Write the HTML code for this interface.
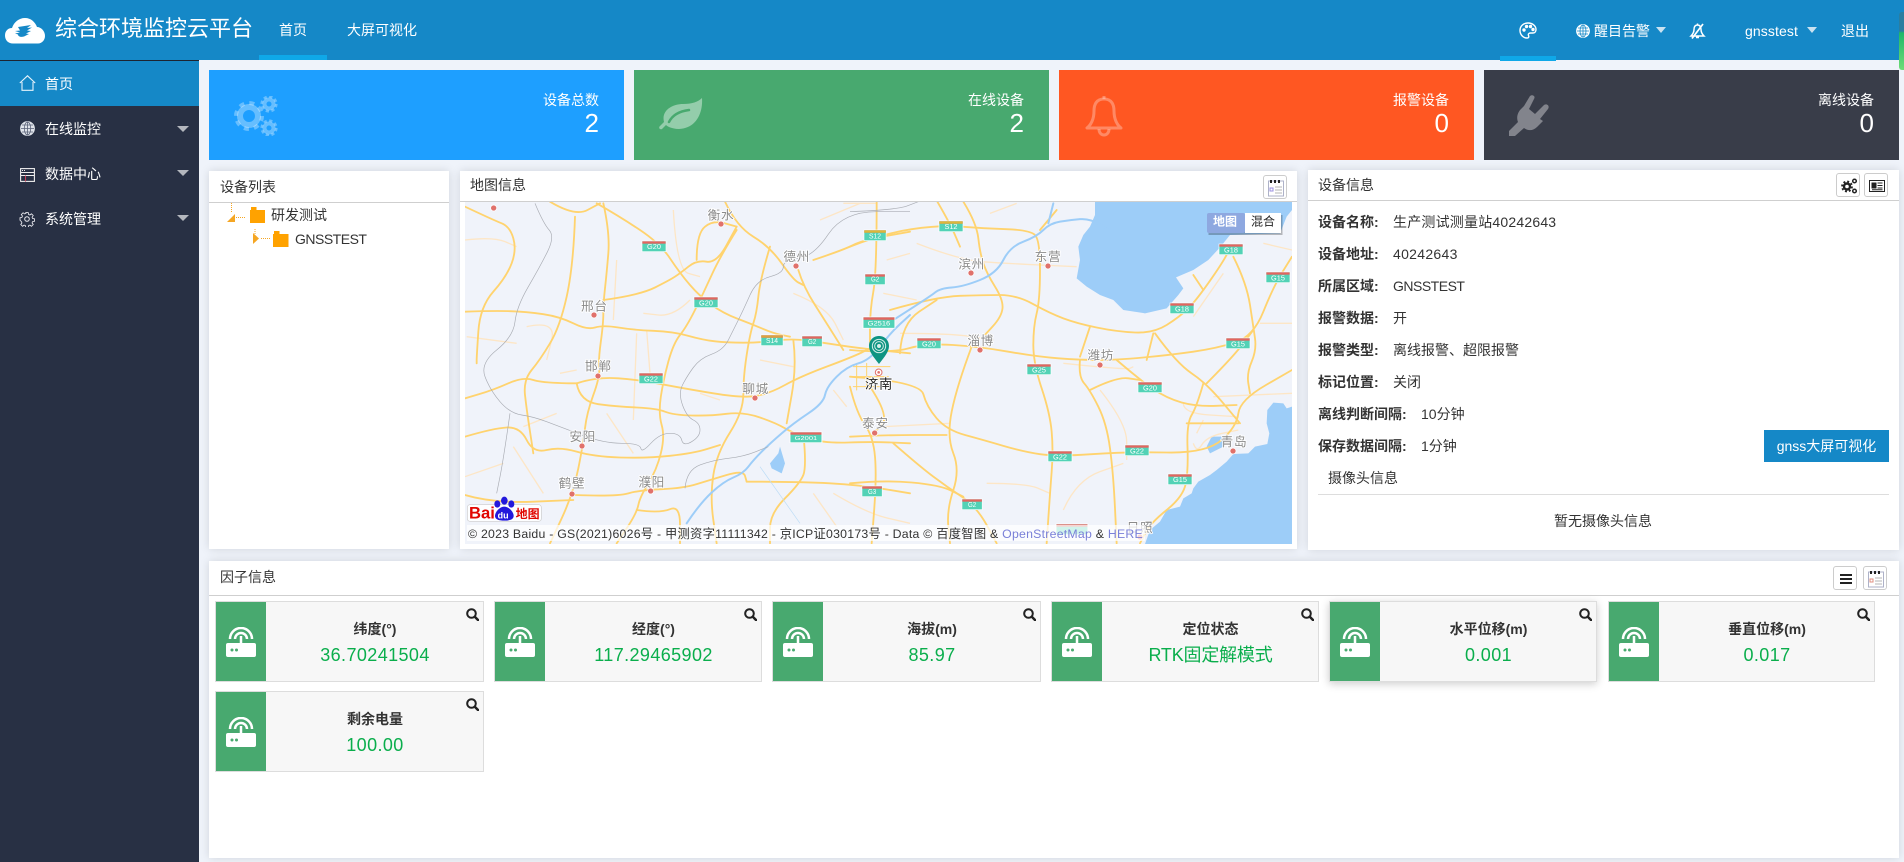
<!DOCTYPE html>
<html lang="zh"><head><meta charset="utf-8"><title>综合环境监控云平台</title>
<style>
*{box-sizing:border-box}
html,body{margin:0;padding:0;width:1904px;height:862px;overflow:hidden;background:#eff3fa;font-family:"Liberation Sans","Noto Sans CJK SC",sans-serif;font-size:14px;color:#333}
.a{position:absolute}
.t{position:absolute;white-space:nowrap;line-height:20px;height:20px}
.w{color:#fff}
.b{font-weight:bold}
.panel{position:absolute;background:#fff;box-shadow:0 0 9px rgba(0,0,0,.13)}
.line{position:absolute;height:1px;background:#cfcfcf}
.stat{position:absolute;top:70px;width:415px;height:90px;color:#fff}
.stat .n{position:absolute;right:25px;top:20px;line-height:20px;white-space:nowrap}
.stat .v{position:absolute;right:25px;top:38px;font-size:26px;line-height:30px}
.stat svg{position:absolute}
.btn{position:absolute;width:24px;height:24px;border:1px solid #ccc;border-radius:3px;background:#fff}
.btn svg{position:absolute;left:3px;top:3px}
.card{position:absolute;width:269px;height:81px;border:1px solid #ddd;background:#f7f7f7}
.card .g{position:absolute;left:0;top:0;bottom:0;width:50px;background:#48a96f}
.card .g svg{position:absolute;left:10px;top:25px}
.card .s{position:absolute;left:250px;top:6px}
.card .l{position:absolute;left:50px;width:218px;text-align:center;top:17px;line-height:20px;font-weight:bold;color:#333}
.card .d{position:absolute;left:50px;width:218px;text-align:center;top:41px;line-height:24px;font-size:18px;color:#0aae4c;letter-spacing:.4px}
.map text{font-family:"Liberation Sans","Noto Sans CJK SC",sans-serif}
.r path{fill:none;stroke:#ffd36e;stroke-width:5.500;stroke-linejoin:round;stroke-linecap:round}
.m path{fill:none;stroke:#fde6c6;stroke-width:4;stroke-linejoin:round}
.c{font-size:38px;letter-spacing:2px;fill:#8b8b8b;text-anchor:middle;paint-order:stroke;stroke:#fff;stroke-width:5px}
.sh{font-size:22px;fill:#fff;text-anchor:middle}
.dot{fill:#e0716b;stroke:#fff;stroke-width:2}
.rv{fill:none;stroke:#9dcdf8;stroke-width:6;stroke-linejoin:round;stroke-linecap:round}
.bd path{fill:none;stroke:#a9acb3;stroke-width:2}
</style></head><body>

<!-- header -->
<div class="a" style="left:0;top:0;width:1904px;height:60px;background:#1588c7"></div>
<svg class="a" style="left:5px;top:18px" width="40" height="26" viewBox="0 0 40 26"><path d="M8 25.500C3 25.500 0 22 0 17.500 0 13 3 10 7 10 9 4 14 0 20 0c6 0 10 4 12 9 4 0 8 4 8 9 0 4-3 7.500-7 7.500z" fill="#fff"/><path d="M13 9l13-2-4 3 5-.5-5 3 4 .5-5 2.500 3 .5-5 2.500c-3 1-6 0-6-2l-3-1 5-1-5-1.500 5-.5z" fill="#1588c7"/></svg>
<div class="t w" style="left:55px;top:19px;font-size:22px">综合环境监控云平台</div>
<div class="t w" style="left:279px;top:20px">首页</div>
<div class="t w" style="left:347px;top:20px">大屏可视化</div>
<div class="a" style="left:259px;top:55px;width:68px;height:5px;background:#0fa8e8"></div>

<svg class="a" style="left:1519px;top:22px" width="18" height="17" viewBox="0 0 18 17" fill="none" stroke="#fff" stroke-width="1.400"><path d="M9 1C4 1 1 4.500 1 8.500S4 16 8 16c2 0 2-1.500 1.500-2.500-.6-1.500.5-2.500 2-2.500H14c2 0 3-1.500 3-3.500C17 4 13.500 1 9 1z"/><circle cx="5" cy="8" r="1" fill="#fff"/><circle cx="7.500" cy="4.500" r="1" fill="#fff"/><circle cx="11.500" cy="4.500" r="1" fill="#fff"/><circle cx="14" cy="7.500" r="1" fill="#fff"/></svg>
<div class="a" style="left:1500px;top:56px;width:56px;height:5px;background:#0fa8e8"></div>
<svg class="a" style="left:1576px;top:24px" width="14" height="14" viewBox="0 0 14 14" fill="none" stroke="#1588c7" stroke-width=".8"><circle cx="7" cy="7" r="6.500" fill="#fff" stroke="#fff"/><ellipse cx="7" cy="7" rx="3" ry="6"/><path d="M1 7h12M2 4h10M2 10h10M7 1v12"/></svg>
<div class="t w" style="left:1594px;top:21px">醒目告警</div>
<div class="a" style="left:1656px;top:27px;border:5.500px solid transparent;border-top:6px solid #c9e2f1;border-bottom:0"></div>
<svg class="a" style="left:1689px;top:23px" width="17" height="16" viewBox="0 0 17 16" fill="none" stroke="#fff" stroke-width="1.500"><path d="M8.500 2C6 2 5 4 5 6.500 5 9 4 11 2 13h13c-2-2-3-4-3-6.500C12 4 11 2 8.500 2zM7 14.500h3M8.500 .5v1.500"/><path d="M14 1L3 15.500" stroke-width="1.700"/></svg>
<div class="t w" style="left:1745px;top:21px;letter-spacing:.1px">gnsstest</div>
<div class="a" style="left:1807px;top:27px;border:5.500px solid transparent;border-top:6px solid #c9e2f1;border-bottom:0"></div>
<div class="t w" style="left:1841px;top:21px">退出</div>
<div class="a" style="left:1899px;top:12px;width:5px;height:58px;border-radius:3px 0 0 3px;background:linear-gradient(#2b7ea0 0,#2b7ea0 33%,#1fb769 36%,#6fdc77 100%)"></div>

<!-- sidebar -->
<div class="a" style="left:0;top:60px;width:199px;height:802px;background:#283044"></div>
<div class="a" style="left:0;top:60px;width:199px;height:1px;background:#1d2430"></div>
<div class="a" style="left:0;top:61px;width:199px;height:45px;background:#1588c7"></div>
<svg class="a" style="left:19px;top:75px" width="17" height="16" viewBox="0 0 17 16" fill="none" stroke="#e6f3fb" stroke-width="1.100"><path d="M.8 8L8.500 .8 16.200 8M3 7v8.300h11V7"/></svg>
<div class="t w" style="left:45px;top:74px">首页</div>
<svg class="a" style="left:20px;top:121px" width="15" height="15" viewBox="0 0 15 15" fill="none" stroke="#5a6278" stroke-width=".8"><circle cx="7.500" cy="7.500" r="7" fill="#dfe3ea" stroke="#dfe3ea"/><ellipse cx="7.500" cy="7.500" rx="3.200" ry="6.500"/><path d="M1 7.500h13M2 4h11M2 11h11M7.500 1v13"/></svg>
<div class="t w" style="left:45px;top:119px">在线监控</div>
<div class="a" style="left:177px;top:126px;border:6px solid transparent;border-top:6px solid #b4b7be;border-bottom:0"></div>
<svg class="a" style="left:20px;top:168px" width="15" height="14" viewBox="0 0 15 14" fill="none" stroke="#eee" stroke-width="1.100"><rect x=".6" y=".6" width="13.800" height="12.800"/><path d="M.6 4.500h13.800M.6 7.500h13.800" stroke-width=".9"/><path d="M5.500 7.500v6" stroke="#c04058"/><path d="M2 2.500h4" stroke-dasharray="1 1"/></svg>
<div class="t w" style="left:45px;top:164px">数据中心</div>
<div class="a" style="left:177px;top:170px;border:6px solid transparent;border-top:6px solid #b4b7be;border-bottom:0"></div>
<svg class="a" style="left:19px;top:211px" width="16" height="16" viewBox="0 0 16 16" fill="none" stroke="#e8e8ee"><circle cx="8" cy="8" r="2.300" stroke-width="1"/><path d="M6.600 .6h2.800l.4 2.200 1.500.6 1.800-1.300 2 2-1.300 1.800.6 1.500 2.200.4v2.800l-2.200.4-.6 1.500 1.300 1.800-2 2-1.800-1.300-1.500.6-.4 2.200H6.600l-.4-2.200-1.500-.6-1.800 1.300-2-2 1.300-1.800-.6-1.500L0 9.400V6.600l2.200-.4.600-1.500L1.500 2.900l2-2 1.800 1.300 1.500-.6z" stroke-width="1" transform="translate(1,1) scale(.875)"/></svg>
<div class="t w" style="left:45px;top:209px">系统管理</div>
<div class="a" style="left:177px;top:215px;border:6px solid transparent;border-top:6px solid #b4b7be;border-bottom:0"></div>

<!-- stats -->
<div class="stat" style="left:209px;background:#1e9fff">
<svg style="left:25px;top:26px" width="44" height="40" viewBox="0 0 44 40" fill="none" stroke="#fff" stroke-opacity=".32"><circle cx="15" cy="20" r="9" stroke-width="6"/><circle cx="15" cy="20" r="13" stroke-width="4" stroke-dasharray="5 5.200"/><circle cx="35" cy="8" r="4.500" stroke-width="4"/><circle cx="35" cy="8" r="7.300" stroke-width="2.600" stroke-dasharray="3.200 2.530"/><circle cx="35" cy="32" r="4.500" stroke-width="4"/><circle cx="35" cy="32" r="7.300" stroke-width="2.600" stroke-dasharray="3.200 2.530"/></svg>
<div class="n">设备总数</div><div class="v">2</div></div>
<div class="stat" style="left:634px;background:#48a96f">
<svg style="left:25px;top:28px" width="44" height="33" viewBox="0 0 44 33"><path d="M43 0C44 14 38 30 20 31 14 31 9 29 7 27L3 31C1 32-1 30 1 28L5 24C2 12 14 6 24 6 33 6 39 4 43 0Z" fill="#fff" fill-opacity=".42"/><path d="M10 24C14 16 22 13 30 12" fill="none" stroke="#48a96f" stroke-width="2.500" stroke-linecap="round"/></svg>
<div class="n">在线设备</div><div class="v">2</div></div>
<div class="stat" style="left:1059px;background:#ff5722">
<svg style="left:26px;top:25px" width="38" height="42" viewBox="0 0 38 42" fill="none" stroke="#fff" stroke-opacity=".3" stroke-width="3"><path d="M19 4C11 4 9 10 9 16 9 24 6 30 2 33H36C32 30 29 24 29 16 29 10 27 4 19 4Z" stroke-linejoin="round"/><path d="M19 1v3M14 34c0 8 10 8 10 0"/></svg>
<div class="n">报警设备</div><div class="v">0</div></div>
<div class="stat" style="left:1484px;background:#393d49">
<svg style="left:25px;top:25px" width="41" height="41" viewBox="0 0 41 41"><path d="M0 41V36L9 27C7 22 9 17 12 14L15 11 21 1C23-1 27 1 25 4L20 14 26 19 35 10C38 8 41 11 39 14L31 24 34 26 28 32C24 36 19 36 15 33L6 41Z" fill="#fff" fill-opacity=".37"/></svg>
<div class="n">离线设备</div><div class="v">0</div></div>

<!-- device list -->
<div class="panel" style="left:209px;top:171px;width:240px;height:378px"></div>
<div class="line" style="left:209px;top:202px;width:240px"></div>
<div class="t" style="left:220px;top:177px">设备列表</div>
<svg class="a" style="left:225px;top:203px" width="70" height="50" viewBox="0 0 70 50" fill="none"><path d="M6.500 0v10M11 14.500h9M30 26v10M36 35.500h9" stroke="#f5a623" stroke-dasharray="1 1"/><path d="M2 19l8-8v8z" fill="#f5a623"/><path d="M28 30l6 5.500-6 5.500z" fill="#f5a623"/></svg>
<svg class="a" style="left:250px;top:207px" width="16" height="16" viewBox="0 0 16 16"><path d="M.5 3h6V0H1v3zM0 3h15v13H0z" fill="#ffa200"/></svg>
<div class="t" style="left:271px;top:205px">研发测试</div>
<svg class="a" style="left:273px;top:231px" width="16" height="16" viewBox="0 0 16 16"><path d="M.5 3h6V0H1v3zM0 3h15.500v13H0z" fill="#ffa200"/></svg>
<div class="t" style="left:295px;top:229px;letter-spacing:-.5px">GNSSTEST</div>

<!-- map panel -->
<div class="panel" style="left:460px;top:171px;width:837px;height:378px"></div>
<div class="line" style="left:460px;top:201px;width:837px"></div>
<div class="t" style="left:470px;top:175px">地图信息</div>
<div class="btn" style="left:1263px;top:175px"><svg width="18" height="18" viewBox="0 0 18 18"><rect x="1.500" y="2" width="15" height="15" fill="#fff" stroke="#aeb2c8"/><path d="M4 1v3M8 1v3M12 1v3" stroke="#222" stroke-width="2"/><path d="M8 8h7M8 11h7M8 14h7" stroke="#b5b5b5"/><rect x="3" y="9" width="3" height="3" fill="none" stroke="#9a8fe0"/></svg></div>

<svg class="a map" style="left:465px;top:202px" width="827" height="342" viewBox="465 202 827 342">
<rect x="465" y="202" width="827" height="342" fill="#f0f3fa"/>
<g transform="translate(460,160) scale(.33333)">
<g class="m">
<path d="M15 240L100 230 170 260"/><path d="M200 500L290 480 260 600"/><path d="M470 300L460 480"/><path d="M560 510L570 640"/><path d="M530 520L520 780"/><path d="M640 150L650 330 720 350"/><path d="M1000 400L1100 440 1150 540"/><path d="M300 640L350 630"/><path d="M15 950L130 910"/><path d="M900 600L1000 620"/><path d="M720 700L780 720"/><path d="M1060 1000L1130 1100"/><path d="M1120 1000L1220 1060 1350 1090"/><path d="M160 860L250 1000"/><path d="M1150 130L1250 130"/><path d="M1280 300L1350 280"/><path d="M1080 180L1200 130"/><path d="M170 550L20 530"/><path d="M190 800L290 760"/><path d="M440 760L520 880"/><path d="M690 420L640 470 550 460"/><path d="M1120 690L1160 740"/>
</g>
<g class="r">
<path d="M15 455L100 452 200 455 300 470 380 510 430 495 520 510 640 515 730 540 800 548 900 548 1000 535 1100 550 1200 565 1350 580"/>
<path d="M15 830L100 805 180 800 220 880 300 860 400 890 560 895 700 880 780 855"/>
<path d="M350 670L250 670 190 650 100 690 15 715"/>
<path d="M350 670L410 650 540 660 670 685 850 715 930 700 1020 650 1180 590 1230 565"/>
<path d="M350 670L360 725 470 740 590 745 640 765 750 768 850 755 950 790 1000 820 1090 850 1240 845 1350 850"/>
<path d="M430 130L450 220 440 340 430 430 430 490 415 600 420 650 380 760 370 850 340 1000 270 1150"/>
<path d="M345 170L340 320 300 500 240 600 190 660 200 750 220 880"/>
<path d="M270 125L345 170 420 130"/>
<path d="M15 140L100 180 150 200 170 270 140 350 60 440 50 590 50 610"/>
<path d="M410 130L480 170 600 250 660 340 720 410 790 460 870 490 940 520 990 530"/>
<path d="M830 210L780 290 730 400 680 500 640 550 610 660 595 760 615 830 590 930 540 1010 530 1060 470 1150"/>
<path d="M795 125L830 200 930 260 1000 360 1030 375"/>
<path d="M930 260L900 360 890 460 870 520 850 650 850 755 770 880 750 1010 770 1150"/>
<path d="M1015 330L1030 380 1100 490 1150 570"/>
<path d="M430 420L540 405 630 360 660 340 710 300 770 310 830 200"/>
<path d="M710 300L710 220 760 180 830 200"/>
<path d="M1060 300L1150 270 1210 240 1350 215"/>
<path d="M1250 125L1250 340 1230 450 1230 560"/>
<path d="M1030 820L1040 920 1020 970 930 1060 930 1150"/>
<path d="M860 965L1020 965 1200 975 1350 1000"/>
<path d="M1170 680L1190 760 1240 830 1250 950 1235 1150"/>
<path d="M530 1050L600 1060 660 1035 660 1150"/>
<path d="M345 1005L470 1010 540 990 670 985 750 960 850 930 860 965"/>
<path d="M15 1005L100 1030 340 1020"/>
<path d="M1000 540L1010 620 980 790"/>
<path d="M1230 680L1290 770 1240 820"/>
<path d="M1180 620h110M1175 650h110M1180 680h110" style="stroke-width:3"/>
<path d="M1190 610v80M1220 610v80" style="stroke-width:3"/>
</g>
<path class="rv" d="M680 1090L720 1030 790 965 850 940 880 900 930 850 1000 790 1090 730 1100 680 1160 620 1230 600 1290 520 1350 465"/>
<path d="M960 860L975 910 965 940 935 925 930 910 955 880Z" fill="#9dcdf8"/>
<path d="M900 920L1020 1090" fill="none" stroke="#bcdcf6" stroke-width="2"/>
<g class="bd"><path d="M225 130L250 190 285 230 240 320 170 440 160 530 60 610 90 690 150 760 220 770 300 800 430 850 540 850 545 880 600 820 660 820 670 860 720 830 720 790 680 770 655 700 680 650 720 595 790 570 820 510 850 450 890 360 970 340 970 300 1060 290 1150 155 1350 155"/><path d="M150 760L130 900 110 1000"/><path d="M675 985L680 930 760 900 850 890 925 860"/></g>
</g>

<g transform="translate(850,160) scale(.33333)">
<path d="M735 125L735 165 720 200 700 225 685 260 690 300 680 355 710 380 750 405 790 420 820 450 885 460 950 445 985 405 1000 385 978 352 1030 330 1075 300 1110 262 1140 225 1290 220 1310 170 1326 150 1326 125Z" fill="#9dcdf8"/>
<path d="M1326 740L1310 745 1300 730 1270 728 1252 750 1250 790 1258 820 1252 852 1215 860 1195 880 1150 882 1130 905 1100 930 1080 945 1045 965 1030 985 1025 1000 1000 1015 990 1040 950 1050 930 1085 900 1110 885 1152H1326Z" fill="#9dcdf8"/>
<path d="M1085 830L1120 830 1120 860 1080 880 1070 860Z" fill="#9dcdf8"/>
<g class="m">
<path d="M420 160L500 130"/><path d="M200 250L330 300 460 310 680 320"/><path d="M200 420L100 400"/><path d="M640 610L830 630 850 620"/><path d="M750 690L830 790 830 900"/><path d="M410 970L530 970 600 1000"/><path d="M640 1050L680 960 820 910"/><path d="M1000 730L1000 760 1160 770"/><path d="M1040 820L1060 780"/><path d="M1230 490L1326 490"/><path d="M1240 250L1326 270"/><path d="M1030 470L1120 340"/><path d="M100 800L300 790"/><path d="M150 520L300 520 430 540"/><path d="M1090 710L1326 700"/><path d="M1030 850L1040 880 1070 830 1165 810"/>
</g>
<g class="r">
<path d="M262 125L300 190 330 260"/>
<path d="M0 260L100 220 270 195 400 205 540 210 570 240 570 420 550 500 550 610 600 760 610 870 600 1000 590 1150"/>
<path d="M340 125L380 190 390 280 410 340 460 420 455 470 400 530"/>
<path d="M120 450L260 410 400 405 500 405 600 460 680 490 800 515 910 520 990 470 1040 420 1130 290 1140 255"/>
<path d="M0 570L120 580 230 550 390 560 560 590 690 600 800 600 960 585 1100 565 1210 530 1270 380 1326 290"/>
<path d="M150 580L155 490 260 420"/>
<path d="M365 560L320 680 290 830 330 930 290 1050 300 1150"/>
<path d="M0 650L210 665 230 740 290 810 400 840 520 875 620 890 830 875 1070 880 1160 800 1170 720 1326 630"/>
<path d="M0 830L100 825 290 825"/>
<path d="M130 850L210 920 290 980 380 1040 440 1150"/>
<path d="M0 970L100 960 270 975 340 1010"/>
<path d="M690 600L685 650 720 690 770 790 790 940 800 1150"/>
<path d="M720 500L690 590"/>
<path d="M910 520L890 600"/>
<path d="M915 520L980 610 1070 670 1170 790"/>
<path d="M1070 670L1150 590 1210 510"/>
<path d="M1150 290L1190 370 1210 500 1220 570 1190 640 1200 700"/>
<path d="M800 600L870 660 950 715 1040 740 1160 735"/>
<path d="M1060 670L1040 740 1010 790 1015 930 1000 1010 900 1090 870 1150"/>
<path d="M620 150L570 210"/>
<path d="M1010 790L1165 790"/>
<path d="M1030 345L1060 390"/>
<path d="M720 690L800 650 870 660"/>
</g>
<path class="rv" d="M130 480L240 410 270 385 340 380 440 340 480 260 560 230 600 190 660 180 720 175 780 212"/>
<path class="rv" d="M610 130L595 190" stroke-width="5"/>
<g class="bd"><path d="M0 155L140 150 205 125"/></g>
</g>

<!-- shields -->
<defs><g id="sb"><rect x="0" y="0" width="72" height="32" fill="#52d2b6" stroke="#fff" stroke-width="2"/><rect x="1" y="1" width="70" height="7" fill="#e4645f"/></g></defs>
<g transform="translate(460,160) scale(.33333)">
<g transform="translate(546,243)"><use href="#sb"/><text class="sh" x="36" y="24">G20</text></g>
<g transform="translate(702,411)"><use href="#sb"/><text class="sh" x="36" y="26">G20</text></g>
<g transform="translate(903,525) scale(.92,1)"><use href="#sb"/><rect x="1" y="1" width="70" height="7" fill="#e0a040"/><text class="sh" x="36" y="24">S14</text></g>
<g transform="translate(1026,528) scale(.84,1)"><use href="#sb"/><text class="sh" x="36" y="24">G2</text></g>
<g transform="translate(1212,210) scale(.92,1)"><use href="#sb"/><rect x="1" y="1" width="70" height="7" fill="#dcb83a"/><text class="sh" x="36" y="26">S12</text></g>
<g transform="translate(1215,342) scale(.84,1)"><use href="#sb"/><text class="sh" x="36" y="22">G2</text></g>
<g transform="translate(1209,471) scale(1.33,1.05)"><use href="#sb"/><text class="sh" x="36" y="25" style="font-size:17px">G2516</text></g>
<g transform="translate(537,639)"><use href="#sb"/><text class="sh" x="36" y="25">G22</text></g>
<g transform="translate(990,816) scale(1.33,1)"><use href="#sb"/><text class="sh" x="36" y="24" style="font-size:17px">G2001</text></g>
<g transform="translate(1206,978) scale(.84,1)"><use href="#sb"/><text class="sh" x="36" y="24">G3</text></g>
</g>
<g transform="translate(850,160) scale(.33333)">
<g transform="translate(267,183)"><use href="#sb"/><rect x="1" y="1" width="70" height="7" fill="#dcb83a"/><text class="sh" x="36" y="24">S12</text></g>
<g transform="translate(201,534)"><use href="#sb"/><text class="sh" x="36" y="25">G20</text></g>
<g transform="translate(531,612)"><use href="#sb"/><text class="sh" x="36" y="25">G25</text></g>
<g transform="translate(960,429)"><use href="#sb"/><text class="sh" x="36" y="26">G18</text></g>
<g transform="translate(1107,252)"><use href="#sb"/><text class="sh" x="36" y="26">G18</text></g>
<g transform="translate(1248,336)"><use href="#sb"/><text class="sh" x="36" y="26">G15</text></g>
<g transform="translate(1128,534)"><use href="#sb"/><text class="sh" x="36" y="26">G15</text></g>
<g transform="translate(864,666)"><use href="#sb"/><text class="sh" x="36" y="26">G20</text></g>
<g transform="translate(594,873)"><use href="#sb"/><text class="sh" x="36" y="25">G22</text></g>
<g transform="translate(825,855)"><use href="#sb"/><text class="sh" x="36" y="26">G22</text></g>
<g transform="translate(954,942)"><use href="#sb"/><text class="sh" x="36" y="24">G15</text></g>
<g transform="translate(336,1017) scale(.84,1)"><use href="#sb"/><text class="sh" x="36" y="24">G2</text></g>
<g transform="translate(618,1092) scale(1.33,1)"><use href="#sb"/></g>
</g>

<!-- cities -->
<g transform="translate(460,160) scale(.33333)">
<circle class="dot" cx="101" cy="144" r="9"/>
<text class="c" x="783" y="178">衡水</text><circle class="dot" cx="783" cy="192" r="9"/>
<text class="c" x="1010" y="303">德州</text><circle class="dot" cx="1008" cy="318" r="9"/>
<text class="c" x="403" y="451">邢台</text><circle class="dot" cx="402" cy="465" r="9"/>
<text class="c" x="415" y="631">邯郸</text><circle class="dot" cx="414" cy="648" r="9"/>
<text class="c" x="887" y="699">聊城</text><circle class="dot" cx="885" cy="714" r="9"/>
<text class="c" x="368" y="843">安阳</text><circle class="dot" cx="366" cy="858" r="9"/>
<text class="c" x="336" y="983">鹤壁</text><circle class="dot" cx="336" cy="1002" r="9"/>
<text class="c" x="575" y="979">濮阳</text><circle class="dot" cx="572" cy="993" r="9"/>
<text class="c" x="1246" y="803">泰安</text><circle class="dot" cx="1244" cy="819" r="9"/>
<text class="c" x="1257" y="686" style="fill:#222;font-size:40px">济南</text>
<circle cx="1256" cy="637" r="10" fill="#fff" stroke="#e0716b" stroke-width="3"/><circle cx="1256" cy="637" r="4" fill="#e0716b"/>
<path d="M1257 612C1240 590 1227 575 1227 558 1227 541 1240 528 1257 528 1274 528 1287 541 1287 558 1287 575 1274 590 1257 612Z" fill="#0e9482"/>
<circle cx="1257" cy="558" r="20" fill="none" stroke="#d6efe9" stroke-width="3"/><circle cx="1257" cy="558" r="13" fill="none" stroke="#d6efe9" stroke-width="3"/><circle cx="1257" cy="558" r="6" fill="#d6efe9"/>
</g>
<g transform="translate(850,160) scale(.33333)">
<text class="c" x="365" y="325">滨州</text><circle class="dot" cx="363" cy="339" r="9"/>
<text class="c" x="594" y="303">东营</text><circle class="dot" cx="594" cy="318" r="9"/>
<text class="c" x="392" y="555">淄博</text><circle class="dot" cx="390" cy="570" r="9"/>
<text class="c" x="752" y="599">潍坊</text><circle class="dot" cx="750" cy="615" r="9"/>
<text class="c" x="1152" y="858">青岛</text><circle class="dot" cx="1149" cy="873" r="9"/>
<text class="c" x="870" y="1116">日照</text><circle class="dot" cx="870" cy="1131" r="9"/>
</g>

<!-- baidu logo -->
<g transform="translate(460,160) scale(.33333)">
<rect x="22" y="1034" width="222" height="50" rx="8" fill="#fff" fill-opacity=".85" stroke="#ccc" stroke-width="2"/>
<text x="27" y="1076" font-size="50" font-weight="bold" fill="#e10601">Bai</text>
<g fill="#2319dc"><ellipse cx="133" cy="1022" rx="10" ry="12"/><ellipse cx="112" cy="1032" rx="9" ry="11"/><ellipse cx="154" cy="1032" rx="9" ry="11"/><path d="M133 1040c-14 0-28 16-28 28 0 10 12 14 28 14s28-4 28-14c0-12-14-28-28-28z"/></g>
<text x="113" y="1076" font-size="27" font-weight="bold" fill="#fff">du</text>
<text x="167" y="1074" font-size="36" font-weight="bold" fill="#e10601">地图</text>
</g>
<rect x="467" y="525" width="678" height="16" fill="#fff" fill-opacity=".72"/>
<text x="468" y="538" font-size="12.300" letter-spacing=".24" fill="#333">© 2023 Baidu - GS(2021)6026号 - 甲测资字11111342 - 京ICP证030173号 - Data © 百度智图 &amp; <tspan fill="#7a80d8">OpenStreetMap</tspan> &amp; <tspan fill="#7a80d8">HERE</tspan></text>

<!-- switch -->
<rect x="1207" y="213" width="74" height="20" fill="#000" fill-opacity=".25" transform="translate(1.500,2)"/>
<rect x="1207" y="213" width="38" height="20" rx="2" fill="#8ea8e0"/>
<rect x="1245" y="213" width="36" height="20" fill="#fff"/>
<text x="1225" y="225.500" font-size="12" font-weight="bold" fill="#fff" text-anchor="middle">地图</text>
<text x="1263" y="225.500" font-size="12" fill="#222" text-anchor="middle">混合</text>
</svg>

<!-- device info -->
<div class="panel" style="left:1308px;top:170px;width:591px;height:380px"></div>
<div class="line" style="left:1308px;top:200px;width:591px"></div>
<div class="t" style="left:1318px;top:175px">设备信息</div>
<div class="btn" style="left:1836px;top:173px"><svg width="18" height="18" viewBox="0 0 18 18" fill="none" stroke="#222"><circle cx="7" cy="9.500" r="3" stroke-width="2.400"/><circle cx="7" cy="9.500" r="5" stroke-width="1.800" stroke-dasharray="2 1.930"/><circle cx="14.500" cy="4" r="1.800" stroke-width="1.500"/><circle cx="14.500" cy="14" r="1.800" stroke-width="1.500"/></svg></div>
<div class="btn" style="left:1864px;top:173px"><svg width="18" height="18" viewBox="0 0 18 18" fill="none" stroke="#222"><rect x="1.500" y="3.500" width="15" height="11"/><rect x="4" y="6" width="4" height="5" fill="#222"/><path d="M9.500 6h5M9.500 8.500h5M9.500 11h5M4 12.700h10.500"/></svg></div>
<div class="t b" style="left:1318px;top:212px">设备名称:</div><div class="t" style="left:1393px;top:212px;letter-spacing:.2px">生产测试测量站40242643</div>
<div class="t b" style="left:1318px;top:244px">设备地址:</div><div class="t" style="left:1393px;top:244px;letter-spacing:.3px">40242643</div>
<div class="t b" style="left:1318px;top:276px">所属区域:</div><div class="t" style="left:1393px;top:276px;letter-spacing:-.5px">GNSSTEST</div>
<div class="t b" style="left:1318px;top:308px">报警数据:</div><div class="t" style="left:1393px;top:308px">开</div>
<div class="t b" style="left:1318px;top:340px">报警类型:</div><div class="t" style="left:1393px;top:340px">离线报警、超限报警</div>
<div class="t b" style="left:1318px;top:372px">标记位置:</div><div class="t" style="left:1393px;top:372px">关闭</div>
<div class="t b" style="left:1318px;top:404px">离线判断间隔:</div><div class="t" style="left:1421px;top:404px">10分钟</div>
<div class="t b" style="left:1318px;top:436px">保存数据间隔:</div><div class="t" style="left:1421px;top:436px">1分钟</div>
<div class="a w" style="left:1764px;top:430px;width:125px;height:32px;line-height:32px;text-align:center;background:#1588c7">gnss大屏可视化</div>
<div class="t" style="left:1328px;top:468px">摄像头信息</div>
<div class="line" style="left:1318px;top:494px;width:571px;background:#ddd"></div>
<div class="t" style="left:1554px;top:511px">暂无摄像头信息</div>

<!-- factor panel -->
<div class="panel" style="left:209px;top:561px;width:1690px;height:297px"></div>
<div class="line" style="left:209px;top:595px;width:1690px"></div>
<div class="t" style="left:220px;top:567px">因子信息</div>
<div class="btn" style="left:1833px;top:566px"><svg width="18" height="18" viewBox="0 0 18 18" fill="#222"><rect x="3" y="4" width="12" height="2"/><rect x="3" y="8" width="12" height="2"/><rect x="3" y="12" width="12" height="2"/></svg></div>
<div class="btn" style="left:1863px;top:566px"><svg width="18" height="18" viewBox="0 0 18 18"><rect x="1.500" y="2" width="15" height="15" fill="#fff" stroke="#aeb2c8"/><path d="M4 1v3M8 1v3M12 1v3" stroke="#222" stroke-width="2"/><path d="M8 8h7M8 11h7M8 14h7" stroke="#b5b5b5"/><rect x="3" y="9" width="3" height="3" fill="none" stroke="#e08f80"/></svg></div>

<svg width="0" height="0" style="position:absolute"><defs>
<g id="rt"><rect x="0" y="16" width="30" height="14" rx="2" fill="#fff"/><circle cx="6" cy="23" r="1.500" fill="#48a96f"/><circle cx="10.500" cy="23" r="1.500" fill="#48a96f"/><path d="M15 16V9M9 12A6 6 0 0 1 21 12M4 12A11 11 0 0 1 26 12" fill="none" stroke="#fff" stroke-width="2.500"/></g>
<g id="sr"><circle cx="5.500" cy="5.500" r="4.300" fill="none" stroke="#222" stroke-width="2"/><path d="M8.800 8.800L12.500 12.500" stroke="#222" stroke-width="2.500" stroke-linecap="round"/></g>
</defs></svg>

<div class="card" style="left:215px;top:601px"><div class="g"><svg width="30" height="30"><use href="#rt"/></svg></div><svg class="s" width="13" height="13"><use href="#sr"/></svg><div class="l">纬度(°)</div><div class="d">36.70241504</div></div>
<div class="card" style="left:494px;top:601px;width:268px"><div class="g"><svg width="30" height="30"><use href="#rt"/></svg></div><svg class="s" width="13" height="13" style="left:249px"><use href="#sr"/></svg><div class="l" style="width:217px">经度(°)</div><div class="d" style="width:217px">117.29465902</div></div>
<div class="card" style="left:772px;top:601px"><div class="g"><svg width="30" height="30"><use href="#rt"/></svg></div><svg class="s" width="13" height="13"><use href="#sr"/></svg><div class="l">海拔(m)</div><div class="d">85.97</div></div>
<div class="card" style="left:1051px;top:601px;width:268px"><div class="g"><svg width="30" height="30"><use href="#rt"/></svg></div><svg class="s" width="13" height="13" style="left:249px"><use href="#sr"/></svg><div class="l" style="width:217px">定位状态</div><div class="d" style="width:217px;letter-spacing:-.2px">RTK固定解模式</div></div>
<div class="card" style="left:1329px;top:601px;width:268px;box-shadow:0 2px 8px rgba(0,0,0,.2)"><div class="g"><svg width="30" height="30"><use href="#rt"/></svg></div><svg class="s" width="13" height="13" style="left:249px"><use href="#sr"/></svg><div class="l" style="width:217px">水平位移(m)</div><div class="d" style="width:217px">0.001</div></div>
<div class="card" style="left:1608px;top:601px;width:267px"><div class="g"><svg width="30" height="30"><use href="#rt"/></svg></div><svg class="s" width="13" height="13" style="left:248px"><use href="#sr"/></svg><div class="l" style="width:216px">垂直位移(m)</div><div class="d" style="width:216px">0.017</div></div>
<div class="card" style="left:215px;top:691px"><div class="g"><svg width="30" height="30"><use href="#rt"/></svg></div><svg class="s" width="13" height="13"><use href="#sr"/></svg><div class="l">剩余电量</div><div class="d">100.00</div></div>

<script>
document.querySelectorAll('.r path,.m path,.bd path,path.rv').forEach(function(p){
  var d=p.getAttribute('d');
  if(/[hvHVZz]/.test(d))return;
  var n=d.match(/-?[\d.]+/g).map(Number),pts=[];
  for(var i=0;i<n.length;i+=2)pts.push([n[i],n[i+1]]);
  if(pts.length<3)return;
  var s='M'+pts[0][0]+' '+pts[0][1];
  for(var j=1;j<pts.length-1;j++){
    var mx=(pts[j][0]+pts[j+1][0])/2,my=(pts[j][1]+pts[j+1][1])/2;
    s+='Q'+pts[j][0]+' '+pts[j][1]+' '+mx+' '+my;
  }
  var e=pts[pts.length-1];
  s+='L'+e[0]+' '+e[1];
  p.setAttribute('d',s);
});
</script>
</body></html>
